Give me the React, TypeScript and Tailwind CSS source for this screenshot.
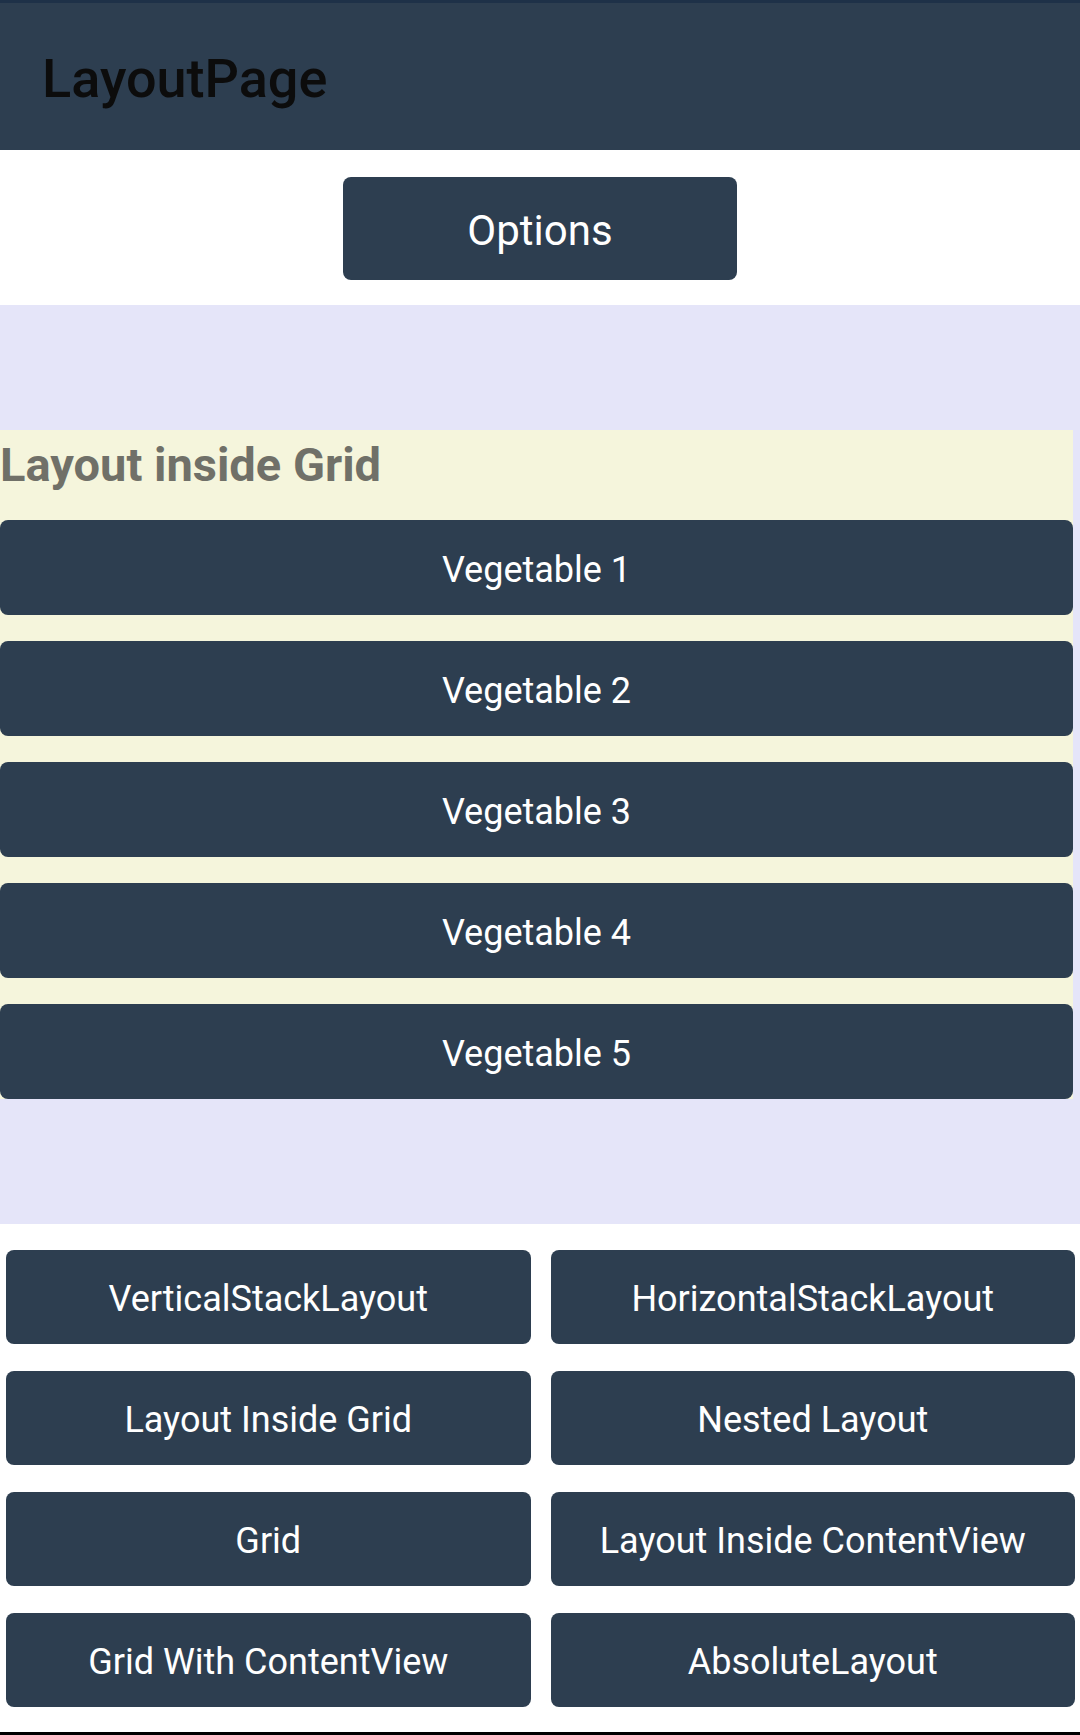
const vegetables = ["Vegetable 1", "Vegetable 2", "Vegetable 3", "Vegetable 4", "Vegetable 5"];

const pages = [
  "VerticalStackLayout",
  "HorizontalStackLayout",
  "Layout Inside Grid",
  "Nested Layout",
  "Grid",
  "Layout Inside ContentView",
  "Grid With ContentView",
  "AbsoluteLayout",
];

function NavButton({ label, className = "" }: { label: string; className?: string }) {
  return (
    <button
      className={`flex items-center justify-center pt-[4px] bg-[#2d3e50] text-white rounded-lg ${className}`}
    >
      {label}
    </button>
  );
}

export default function App() {
  return (
    <div
      className="w-[1080px] h-[1735px] flex flex-col bg-white overflow-hidden"
      style={{ fontFamily: "Roboto, 'Noto Sans', sans-serif" }}
    >
      {/* toolbar */}
      <header className="h-[150px] shrink-0 border-t-[3px] border-[#1e3148] bg-[#2d3e50] flex items-center px-[42px]">
        <h1 className="text-[54px] font-medium text-[#0c0c0c] leading-none mt-[4px]">LayoutPage</h1>
      </header>

      {/* options */}
      <div className="flex justify-center pt-[27px] pb-[25px]">
        <NavButton label="Options" className="w-[394px] h-[103px] text-[42px]" />
      </div>

      {/* lavender area with grid */}
      <div className="bg-[#e5e5f9] py-[125px] pr-[7px]">
        <div className="bg-[#f5f5dc] flex flex-col">
          <h2 className="text-[47px] font-bold text-[#707068] leading-[54px] h-[90px] pt-[8px]">
            Layout inside Grid
          </h2>
          <div className="flex flex-col gap-[26px]">
            {vegetables.map((v) => (
              <NavButton key={v} label={v} className="h-[95px] text-[36px]" />
            ))}
          </div>
        </div>
      </div>

      {/* page links */}
      <div className="flex-1 grid grid-cols-2 gap-x-[20px] gap-y-[27px] pl-[6px] pr-[5px] pt-[26px] content-start">
        {pages.map((p) => (
          <NavButton key={p} label={p} className="h-[94px] text-[36px]" />
        ))}
      </div>
      <div className="h-[3px] bg-black shrink-0" />
    </div>
  );
}
